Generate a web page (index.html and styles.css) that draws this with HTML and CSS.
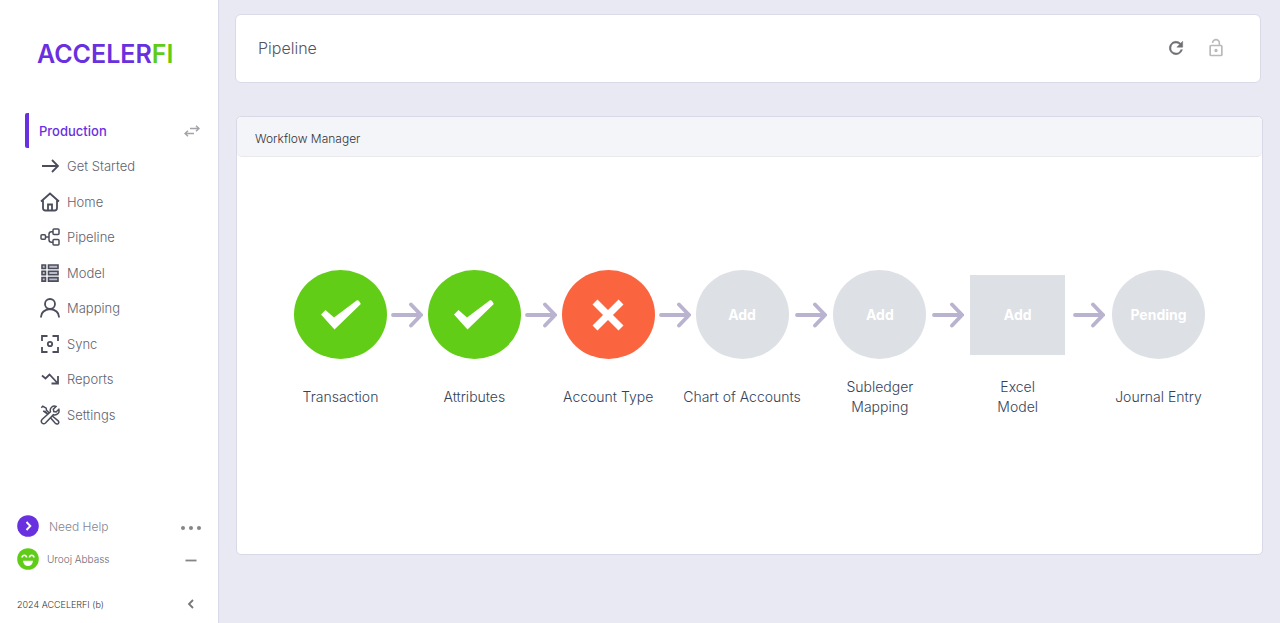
FILE: index.html
```html
<!DOCTYPE html>
<html lang="en">
<head>
<meta charset="utf-8">
<meta name="viewport" content="width=device-width, initial-scale=1">
<title>Pipeline</title>
<link rel="stylesheet" href="styles.css">
</head>
<body>
<svg class="defs" aria-hidden="true">
  <symbol id="arrow" viewBox="0 0 32 26"><path d="M2 13h28M20 2.500l10 10.500-10 10.500" fill="none" stroke="#b9b3cf" stroke-width="3.800" stroke-linecap="round"/></symbol>
  <symbol id="check" viewBox="0 0 42 32"><path d="M1 15.500 5.500 11 14 18.500 37 1.200Q39 .6 40.800 5L14.500 30.500Z" fill="#fff"/></symbol>
</svg>
<div class="app">
  <aside class="sidebar">
    <a class="logo" href="#">ACCELER<span class="logo-accent">FI</span></a>
    <nav class="nav">
      <div class="env">
        <span>Production</span>
        <button class="icon-btn" aria-label="Switch environment">
          <svg width="16" height="12" viewBox="0 0 16 12" fill="none" stroke="#a3a3a8" stroke-width="1.5"><path d="M6 3.500h9M12 .8l3 2.700-3 2.700M10 8.500H1M4 5.800 1 8.500l3 2.700"/></svg>
        </button>
      </div>
      <ul class="menu">
        <li><a href="#"><svg viewBox="0 0 20 20"><path d="M2 10h16M12 4l6 6-6 6"/></svg>Get Started</a></li>
        <li><a href="#"><svg viewBox="0 0 20 20"><path d="M1 9.500 10 1.500l9 8M3 8.500V16q0 2.500 2.500 2.500h9Q17 18.500 17 16V8.500M8 18v-5.500h4V18"/></svg>Home</a></li>
        <li><a href="#"><svg class="thin" viewBox="0 0 20 20"><rect x="1" y="7.800" width="4.500" height="4.500" rx="1"/><rect x="13" y="2" width="6" height="5.500" rx="1"/><rect x="13" y="12.500" width="6" height="5.500" rx="1"/><path d="M5.500 10H9M13 4.800h-1.500Q9 4.800 9 7.300v5.400q0 2.500 2.500 2.500H13"/></svg>Pipeline</a></li>
        <li><a href="#"><svg class="rows" viewBox="0 0 20 20"><path d="M2 2h3.500v3.500H2zM8.500 2H18v3.500H8.500zM2 8.300h3.500v3.500H2zM8.500 8.300H18v3.500H8.500zM2 14.600h3.500v3.500H2zM8.500 14.600H18v3.500H8.500z"/></svg>Model</a></li>
        <li><a href="#"><svg viewBox="0 0 20 20"><circle cx="10" cy="6" r="5"/><path d="M1 19.500v-.8Q1.500 12 10 11q8.500 1 9 7.700v.8"/></svg>Mapping</a></li>
        <li><a href="#"><svg viewBox="0 0 20 20"><path d="M2 7V2h5.500M12.500 2H18v5M2 13v5h5.500M12.500 18H18v-5"/><circle cx="10" cy="10" r="2.200"/></svg>Sync</a></li>
        <li><a href="#"><svg viewBox="0 0 20 20"><path d="M2 6.500 5.500 9.500 9.500 5.500 17 13.500M18 7v7.500h-6.500"/></svg>Reports</a></li>
        <li><a href="#"><svg class="thin" viewBox="0 0 20 20"><path d="M10.500 6.800q-1-3 1.300-4.800 2-1.500 4.200-.5l-2.700 2.700.5 2.300 2.300.5L18.800 4.300q.8 2.600-.8 4.200-1.900 1.900-4.600 1.200L5.500 18q-1.700 1.500-3.500 0-1.500-1.700 0-3.500z"/><path d="M1.300 2.800 2.800 1.300 6.200 3.200l.3 2 2.700 2.700M7.900 9.200 5.200 6.500l-2-.3zM12.300 11l5.600 4.600q1.700 1.700.3 3-1.600 1-3.100-.6L10.500 12.800"/></svg>Settings</a></li>
      </ul>
    </nav>
    <div class="side-foot">
      <div class="foot-row help">
        <svg width="22" height="22" viewBox="0 0 22 22"><circle cx="11" cy="11" r="10.800" fill="#6930e0"/><path d="M9.500 7l3.800 4-3.800 4" fill="none" stroke="#fff" stroke-width="1.900"/></svg>
        <a href="#">Need Help</a>
        <button class="icon-btn" aria-label="More"><svg width="22" height="8" viewBox="0 0 22 8" fill="#858589"><circle cx="3" cy="6" r="2"/><circle cx="11" cy="6" r="2"/><circle cx="19" cy="6" r="2"/></svg></button>
      </div>
      <div class="foot-row user">
        <svg width="22" height="22" viewBox="0 0 22 22"><circle cx="11" cy="11" r="10.800" fill="#5fcd17"/><path d="M5 9.500Q5.300 7.200 7.300 7.200T9.600 9.500M12.400 9.500q.3-2.300 2.300-2.300T17 9.500" fill="none" stroke="#fff" stroke-width="1.600"/><path d="M6 12.800h10q-.7 5.200-5 5.200t-5-5.200z" fill="#fff"/></svg>
        <span>Urooj Abbass</span>
        <button class="icon-btn" aria-label="Collapse account"><svg width="22" height="6" viewBox="0 0 22 6"><path d="M5.500 4.500h11" stroke="#858589" stroke-width="1.800"/></svg></button>
      </div>
      <div class="foot-row copy">
        <span>2024 ACCELERFI (b)</span>
        <button class="icon-btn" aria-label="Collapse sidebar"><svg width="22" height="12" viewBox="0 0 22 12"><path d="M13 2 9 6l4 4" fill="none" stroke="#77777b" stroke-width="1.800"/></svg></button>
      </div>
    </div>
  </aside>

  <main class="main">
    <header class="topbar">
      <h1>Pipeline</h1>
      <button class="icon-btn" aria-label="Refresh"><svg width="20" height="20" viewBox="0 0 24 24" fill="#707074" stroke="#707074" stroke-width=".6"><path d="M17.650 6.350A8 8 0 1 0 19.730 14h-2.080A6 6 0 1 1 12 6c1.660 0 3.140.69 4.220 1.780L13 11h7V4z"/></svg></button>
      <button class="icon-btn" aria-label="Unlock"><svg width="20" height="20" viewBox="0 0 24 24" fill="#b9b9bd"><path d="M18 8h-1V6A5 5 0 0 0 7 6h1.900a3.100 3.100 0 0 1 6.200 0v2H6a2 2 0 0 0-2 2v10a2 2 0 0 0 2 2h12a2 2 0 0 0 2-2V10a2 2 0 0 0-2-2zm0 12H6V10h12zm-6-3a2 2 0 1 0 0-4 2 2 0 0 0 0 4z"/></svg></button>
    </header>

    <section class="panel">
      <h2>Workflow Manager</h2>
      <div class="flow">
        <button class="node done" aria-labelledby="s1"><svg width="42" height="32"><use href="#check"/></svg></button>
        <svg class="arrow"><use href="#arrow"/></svg>
        <button class="node done" aria-labelledby="s2"><svg width="42" height="32"><use href="#check"/></svg></button>
        <svg class="arrow"><use href="#arrow"/></svg>
        <button class="node failed" aria-labelledby="s3"><svg width="32" height="32" viewBox="0 0 32 32"><path d="M3 3l26 26M29 3 3 29" stroke="#fff" stroke-width="7"/></svg></button>
        <svg class="arrow"><use href="#arrow"/></svg>
        <button class="node">Add</button>
        <svg class="arrow"><use href="#arrow"/></svg>
        <button class="node">Add</button>
        <svg class="arrow"><use href="#arrow"/></svg>
        <button class="node square">Add</button>
        <svg class="arrow"><use href="#arrow"/></svg>
        <button class="node">Pending</button>
        <span class="label c1" id="s1">Transaction</span>
        <span class="label c2" id="s2">Attributes</span>
        <span class="label c3" id="s3">Account Type</span>
        <span class="label c4">Chart of Accounts</span>
        <span class="label c5">Subledger<br>Mapping</span>
        <span class="label c6">Excel<br>Model</span>
        <span class="label c7">Journal Entry</span>
      </div>
    </section>
  </main>
</div>
</body>
</html>
```
FILE: styles.css
```css
* { box-sizing: border-box; }

body {
  margin: 0;
  background: #e9e9f4;
  font-family: Inter, "Liberation Sans", sans-serif;
  font-weight: 300;
  color: #55555f;
}

a { color: inherit; text-decoration: none; }
button { font: inherit; border: 0; padding: 0; }
.defs { display: none; }

.icon-btn {
  display: flex;
  background: none;
  cursor: pointer;
}

.app { display: flex; min-height: 100vh; }

/* Sidebar */
.sidebar {
  display: flex;
  flex-direction: column;
  flex: none;
  width: 219px;
  background: #fff;
  border-right: 1px solid #d9d8e6;
}

.logo {
  padding: 37px 0 0 37px;
  font-size: 25px;
  font-weight: 600;
  line-height: 34px;
  color: #6930e0;
}
.logo-accent { color: #5fcd17; }

.nav { padding: 42px 18px 0 25px; }

.env {
  display: flex;
  align-items: center;
  justify-content: space-between;
  height: 35px;
  padding-left: 10px;
  border-left: 4px solid #6930e0;
  border-radius: 2px;
  font-size: 13px;
  font-weight: 500;
  color: #6930e0;
}

.menu { list-style: none; margin: 0; padding: 0 0 0 15px; }
.menu a {
  display: flex;
  align-items: center;
  gap: 7px;
  height: 36px;
  font-size: 13px;
  color: #62626e;
}
.menu li:nth-child(even) a { height: 35px; }
.menu svg {
  width: 20px;
  height: 20px;
  fill: none;
  stroke: #4b4d5c;
  stroke-width: 1.8;
}
.menu .thin { stroke-width: 1.5; }
.menu .rows { fill: #b9bcc6; stroke-width: 1.6; }

.side-foot { margin-top: auto; padding: 0 16px 8px 17px; }
.foot-row { display: flex; align-items: center; }
.foot-row .icon-btn { margin-left: auto; }
.help { height: 34px; gap: 10px; font-size: 12px; color: #85858f; }
.user { height: 32px; gap: 8px; font-size: 10px; color: #6b6b76; }
.copy { height: 22px; margin-top: 18px; font-size: 9px; color: #33333a; }

/* Main area */
.main {
  display: flex;
  flex: 1;
  flex-direction: column;
  gap: 33px;
  min-width: 0;
  padding: 14px 17px 68px 16px;
}

.topbar {
  display: flex;
  align-items: center;
  gap: 20px;
  height: 69px;
  margin-right: 2px;
  padding: 0 34px 2px 22px;
  background: #fff;
  border: 1px solid #dad9e8;
  border-radius: 6px;
}
.topbar h1 {
  flex: 1;
  margin: 0;
  font-size: 16px;
  font-weight: 300;
}

.panel {
  flex: 1;
  display: flex;
  flex-direction: column;
  margin-left: 1px;
  background: #fff;
  border: 1px solid #d9d8e6;
  border-radius: 5px;
}
.panel h2 {
  margin: 0;
  padding: 4px 18px 0;
  background: #f4f5f8;
  border-bottom: 1px solid #e8e9ef;
  border-radius: 5px;
  font-size: 12px;
  font-weight: 300;
  line-height: 35px;
  color: #33333a;
}

.flow {
  display: grid;
  grid-template-columns: 93px 41fr 93px 41fr 93px 41fr 93px 45fr 93px 44fr 95px 47fr 93px;
  grid-template-rows: 89px 76px;
  align-items: center;
  justify-items: center;
  padding: 113px 57px;
}

.node {
  display: flex;
  align-items: center;
  justify-content: center;
  width: 100%;
  height: 89px;
  border-radius: 50%;
  background: #dde0e5;
  color: #fff;
  font-size: 14px;
  font-weight: 700;
  cursor: pointer;
}
.node.done { background: #62cd17; }
.node.failed { background: #fa643f; }
.node.square { height: 80px; border-radius: 0; }

.arrow { width: 32px; height: 26px; }

.label {
  grid-row: 2;
  font-size: 14px;
  line-height: 20px;
  text-align: center;
  white-space: nowrap;
  color: #34435a;
}
.c1 { grid-column: 1; }
.c2 { grid-column: 3; }
.c3 { grid-column: 5; }
.c4 { grid-column: 7; }
.c5 { grid-column: 9; }
.c6 { grid-column: 11; }
.c7 { grid-column: 13; }
```
